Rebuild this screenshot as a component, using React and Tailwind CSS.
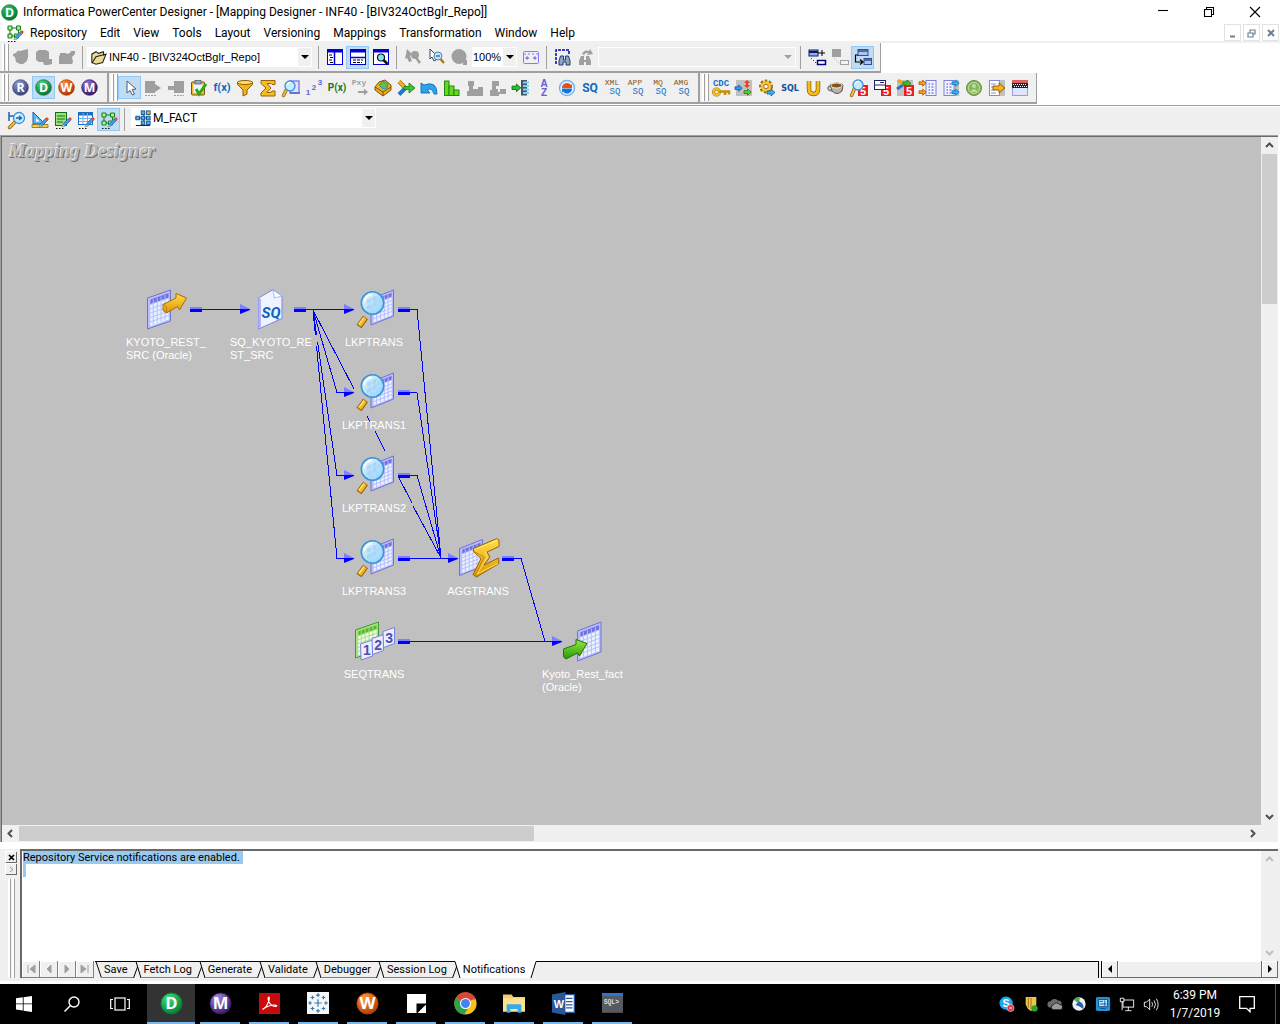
import React from "react";

const UI = "font-['Roboto','Open_Sans',sans-serif]";
const SANS = "font-['Liberation_Sans',Arial,sans-serif]";

/* ---------- small icon pieces ---------- */

function Svg({ children, s = 18, label }) {
  return (
    <svg width={s} height={s} viewBox="0 0 18 18" className="block shrink-0 overflow-visible" role="img" aria-label={label}>
      {children}
    </svg>
  );
}

function T({ x, y, size = 8, fill, children, font = "Liberation Sans", weight = "bold", anchor = "middle", italic }) {
  return (
    <text x={x} y={y} fontSize={size} fill={fill} fontFamily={`${font}, sans-serif`} fontWeight={weight} fontStyle={italic ? "italic" : "normal"} textAnchor={anchor}>
      {children}
    </text>
  );
}

function Ball({ letter, light, dark, id, size = 18, label }) {
  return (
    <Svg s={size} label={label || letter}>
      <defs>
        <radialGradient id={id} cx="35%" cy="25%" r="80%">
          <stop offset="0" stopColor={light} />
          <stop offset="1" stopColor={dark} />
        </radialGradient>
      </defs>
      <circle cx="9" cy="9" r="8.3" fill={`url(#${id})`} stroke={dark} strokeWidth="0.7" />
      <T x="9" y="13.5" size={13} fill="#fff" font="Open Sans">{letter}</T>
    </Svg>
  );
}

const Pencil = () => (
  <g>
    <path d="M8 16l1-3 6-6 2 2-6 6z" fill="#3b9be8" stroke="#1c5fa8" strokeWidth=".6" />
    <path d="M14 8l2-2 2 2-2 2z" fill="#e8502a" />
    <path d="M8 16l.8-2.6L11 15z" fill="#f1c46a" />
  </g>
);
const Dots = () => <path d="M2 17.5h8" stroke="#111" strokeWidth="1.2" strokeDasharray="1.5 1.5" />;

const MapIcon = () => (
  <Svg label="Mapping">
    <path d="M5 4h6M4 6v6M12.500 6v3M5 12h5" stroke="#1b7a1b" strokeWidth="1.1" fill="none" />
    {[[2, 2], [10.5, 2], [2, 10], [8.5, 10]].map(([x, y], i) => (
      <rect key={i} x={x} y={y} width="4" height="4" rx=".8" fill="#b5f09a" stroke="#12801a" strokeWidth="1.1" />
    ))}
    <Pencil />
    <Dots />
  </Svg>
);

const Lens = ({ x = 10, y = 7, r = 5.5 }) => (
  <g>
    <path d={`M${x - r * 0.7} ${y + r * 0.7}L1.5 16.5`} stroke="#8a5a0a" strokeWidth="3.4" strokeLinecap="round" />
    <path d={`M${x - r * 0.7} ${y + r * 0.7}L1.5 16.5`} stroke="#f3b93a" strokeWidth="2" strokeLinecap="round" />
    <circle cx={x} cy={y} r={r} fill="#c4ecff" stroke="#3c8fd6" strokeWidth="1.3" />
    <path d={`M${x - 3} ${y - 1}q1-3 4-2.5`} stroke="#fff" strokeWidth="1.3" fill="none" />
  </g>
);

const G = "#9f9f9f";
const Five = ({ x = 8, y = 6 }) => (
  <g>
    <rect x={x} y={y} width="10" height="11" fill="#ee1c1c" />
    <T x={x + 5} y={y + 9.5} size={11} fill="#fff">5</T>
  </g>
);

const Tbl = ({ c = "#7d7fe0" }) => (
  <g>
    <rect x="4" y="1.5" width="10" height="15" fill="#f3f3ff" stroke={c} />
    <path d="M6.500 5h1.500M9.500 5h2M6.500 8h1.500M9.500 8h2M6.500 11h1.500M9.500 11h2M6.500 14h1.500M9.500 14h2" stroke={c} strokeWidth="1.5" />
  </g>
);

const Arr = ({ x, y, c, d = "#333", k = 1 }) => (
  <path transform={`translate(${x} ${y}) scale(${k})`} d="M0 2h4V0l4 3.500L4 7V5H0z" fill={c} stroke={d} strokeWidth=".8" />
);

const BigSq = ({ top }) => (
  <Svg label={`${top} source qualifier`}>
    <T x="8" y="6" size={8} fill="#8a5a14" font="Liberation Mono" weight="normal">{top}</T>
    <T x="11" y="15" size={9} fill="#1472c8" font="Liberation Mono" weight="normal">SQ</T>
  </Svg>
);

const blobs = {
  g1: <path d="M1 7q0-2 3-2 1-3 4-2l8-2v8l-1 4-4 3H8l-4-2-1-5-2-1z" />,
  g2: <path d="M1 4l3-2h7l3 2v7h3v5l-4 1H9l-1-3H4l-3-2V7z" />,
  g3: <path d="M2 5h6l1 1 3-1 1-2h4v3l-3 3 1 5-1 2H1V8l1-1z" />,
};

/* ---------- toolbar icons ---------- */

const bar2 = [
  ["Select", <path d="M6 2v12l3-2.500 2.500 4.500 2-1-2.300-4.500 3.800-.5z" fill="#fff" stroke="#4a5a78" />, true],
  ["Source", <g fill={G}><path d="M1 2h10v3l6 4-6 4v1H1z" /><path d="M1 16.500h11" stroke={G} strokeDasharray="2 1" /></g>],
  ["Target", <g fill={G}><path d="M7 2h10v12H7v-3H1V7h6z" /><path d="M7 16.500h10" stroke={G} strokeDasharray="2 1" /></g>],
  ["Validate", <g><rect x="1.500" y="3" width="13" height="13" rx="1" fill="#f0b62c" stroke="#7c5606" /><rect x="3.500" y="5" width="9" height="9" fill="#eef4ff" /><rect x="5" y="1.500" width="6" height="3.500" fill="#9ab" stroke="#456" strokeWidth=".7" /><path d="M6 10l3 5 7-10" stroke="#2cab12" strokeWidth="3" fill="none" /></g>],
  ["Expression", <T x="9" y="12" size={11} fill="#0b66c2" font="Roboto">f(x)</T>],
  ["Filter", <g><path d="M1.500 3v2.500L7 11v6l4-2v-4l5.500-5.500V3z" fill="#f3b51e" stroke="#8e5c05" /><ellipse cx="9" cy="3.500" rx="7.500" ry="2" fill="#ffdf70" stroke="#8e5c05" /></g>],
  ["Aggregator", <path d="M2 1.500h14v4h-3l-1-1H8l4 4.500-4 4.500h4l1-1.500h3v5H2v-3L7 9 2 4.500z" fill="#f6bd1c" stroke="#96630a" />],
  ["Lookup", <g><rect x="8" y="2" width="9" height="12" fill="#dfe4ff" stroke="#7a7fe6" strokeWidth="1.400" /><path d="M8 14h10" stroke="#6a6fe0" strokeWidth="2" /><Lens x={8} y={7} r={5} /></g>],
  ["Sequence", <g><T x="3" y="16" size={8} fill="#6464d8">1</T><T x="9" y="11" size={8} fill="#6464d8">2</T><T x="15" y="6" size={8} fill="#6464d8">3</T></g>],
  ["Parameter", <T x="9" y="12" size={10} fill="#15761c" font="Roboto">P(x)</T>],
  ["Procedure", <g><T x="8" y="6" size={8} fill={G} font="Liberation Mono">Pxy</T><path d="M7 12h6V9.500l4 3.500-4 3.500V14H7z" fill={G} /></g>],
  ["Custom", <g><path d="M1 8l4-5 6-2 6 5v5l-8 6-8-6z" fill="#eeb020" stroke="#7a5208" /><path d="M1 8l8 5 8-5M9 13v4" stroke="#7a5208" fill="none" /><path d="M5 6l4-4 5 3-1 4-4 1z" fill="#5dc050" stroke="#1e7fd0" strokeWidth=".8" /></g>],
  ["Joiner", <g><path d="M2 15.500l6-6" stroke="#1f78c8" strokeWidth="4" /><path d="M2 2.500l6 6" stroke="#9a6808" strokeWidth="4" /><path d="M2 2.500l6 6" stroke="#f3b91c" strokeWidth="2.500" /><path d="M7 7.500h5V4l6 5-6 5v-3.500H7z" fill="#3fc32a" stroke="#0e7a14" strokeWidth=".8" /></g>],
  ["Undo", <path d="M1 4v10h9L7.500 11q4-3 6.500 4h3Q17 1 4 6z" fill="#29a3ec" stroke="#0e62b0" strokeWidth=".8" />],
  ["Rank", <g fill="#66d81c" stroke="#1f8a10" strokeWidth="1"><rect x="1.500" y="2" width="4.500" height="14.500" /><rect x="6" y="7" width="5" height="9.500" /><rect x="11" y="11" width="5" height="5.500" /></g>],
  ["Normalizer", <path d="M2 2h6v5H7v3h5V8h5v9H1v-5h2V7H2z" fill={G} />],
  ["Router", <path d="M3 2h7v5H7v3h2v3h2v-3h6v5h-7v2H1v-6h2z" fill={G} />],
  ["Update", <g><rect x="9" y="1" width="6" height="15.500" fill="#456" /><path d="M11 3.500h6M11 7h6M11 10.500h6M11 14h6" stroke="#7ed3f6" strokeWidth="2" /><Arr x={0} y={5} c="#2cc12c" d="#0d6c12" k={1.1} /></g>],
  ["Sorter", <g><T x="9" y="8" size={10} fill="#6a5acd">A</T><T x="9" y="17" size={10} fill="#6a5acd">Z</T></g>],
  ["Transaction", <g><circle cx="9" cy="9" r="7.500" fill="#eef6ff" stroke="#74b3f0" strokeWidth="1.500" /><path d="M4 9a5 5 0 0 1 9-3l1-1v4H9.500" fill="#ee4b14" /><path d="M14 9.500a5 5 0 0 1-9 3l-1 1V9.500h5" fill="#1a73d2" /></g>],
  ["Source Qualifier", <T x="9" y="13" size={12} fill="#0c6bc6" font="Roboto">SQ</T>],
];

const bar3 = [
  ["CDC key", <g><T x="9" y="7" size={9} fill="#1272c2" font="Liberation Mono">CDC</T><circle cx="4.500" cy="13" r="3" fill="none" stroke="#a87208" strokeWidth="3" /><circle cx="4.500" cy="13" r="3" fill="none" stroke="#f5c126" strokeWidth="2" /><path d="M7 12.500h10v3M13 13v3" stroke="#c88c0c" strokeWidth="2.500" fill="none" /></g>],
  ["Exchange", <g><rect x="1" y="1" width="16" height="16" fill="#c0c0c0" /><Arr x={0} y={6} c="#2b9df0" d="#124f90" k={0.9} /><Arr x={9} y={10} c="#5bd22a" d="#156a10" k={0.9} /><path d="M12 1l3 3h-2v2h2l-3 3-3-3h2V4H9z" fill="#ee3b18" /></g>],
  ["Gear", <g><circle cx="8" cy="7.500" r="5.500" fill="#f2bd32" stroke="#a4720f" strokeWidth="3" strokeDasharray="2.500 1.500" /><circle cx="8" cy="7.500" r="5" fill="#f5c540" /><circle cx="8" cy="7.500" r="2.200" fill="#fff" stroke="#a4720f" /><Arr x={9} y={10} c="#37aff5" d="#1260a8" k={1} /></g>],
  ["SQL", <T x="9" y="12" size={8} fill="#0f4f96" font="DejaVu Sans">SQL</T>],
  ["Union", <g fill="none"><path d="M5 2v8q0 5 4.500 5T14 10V2" stroke="#8e5e06" strokeWidth="4.500" /><path d="M5 2v8q0 5 4.500 5T14 10V2" stroke="#f7bd17" strokeWidth="3" /></g>],
  ["Java", <g><path d="M3 6q7-4 13 0l-1 6q-5 5-10 0z" fill="#b9b4aa" stroke="#555" /><ellipse cx="9.500" cy="6.500" rx="5.500" ry="2.500" fill="#8a5316" stroke="#eee" /><path d="M4 7q-5 1-2 4l3 1" stroke="#777" fill="none" strokeWidth="1.500" /></g>],
  ["Find 5", <g><Five /><Lens x={8} y={6} r={5} /></g>],
  ["Table 5", <g><Five /><rect x="1.500" y="1.500" width="11" height="9" fill="#fff" stroke="#20206a" /><path d="M2 6h10M7 3.500h4" stroke="#20206a" /></g>],
  ["Join 5", <g><rect x="1" y="1" width="16" height="16" fill="#c0c0c0" /><Five /><path d="M1 10l6-4" stroke="#1f78c8" strokeWidth="3" /><path d="M2 1l6 4" stroke="#e5a80e" strokeWidth="3" /><Arr x={7} y={1} c="#3fc32a" d="#0e7a14" k={1} /></g>],
  ["Import", <g><g transform="translate(3 0)"><Tbl /></g><Arr x={0} y={1} c="#f2a617" d="#a04808" k={0.9} /><Arr x={0} y={10} c="#f2a617" d="#a04808" k={0.9} /></g>],
  ["Export", <g><g transform="translate(-2 0)"><rect x="4" y="1" width="15" height="16" fill="#c0c0c0" /><Tbl /></g><Arr x={10} y={1} c="#25b8f6" d="#0d6fb4" k={0.9} /><Arr x={10} y={10} c="#25b8f6" d="#0d6fb4" k={0.9} /></g>],
  ["Identity", <g><circle cx="9" cy="9" r="7.500" fill="#86b55c" stroke="#5f8f3d" /><circle cx="9" cy="9" r="5.500" fill="none" stroke="#bfe0a0" /><circle cx="9" cy="7" r="2" fill="#bfe0a0" /><path d="M5.500 13q3.500-6 7 0" fill="#bfe0a0" /></g>],
  ["Output", <g><rect x="10" y="1" width="7" height="16" fill="#c0c0c0" /><rect x="1.500" y="1.500" width="10" height="15" fill="#fff" stroke="#8487e2" /><path d="M3 5h5M3 8h3M3 11h3M3 14h5" stroke="#8487e2" /><path d="M5 7h6V4l6 5-6 5v-3H5z" fill="#f6b21a" stroke="#96600a" /></g>],
  ["Mask", <g><rect x="1.500" y="1.500" width="15" height="15" fill="#dfe4ff" stroke="#9a9ce0" /><rect x="1" y="1" width="16" height="3" fill="#e06060" /><rect x="1" y="4" width="16" height="5" fill="#222" /><path d="M2 5.500h14M3 7.500h14" stroke="#fff" strokeDasharray="1 1" /></g>],
];

const Win = ({ children }) => (
  <g><rect x="1.500" y="1.500" width="15" height="15" fill="#fff" stroke="#0000d8" /><path d="M1 3h16" stroke="#0000d8" strokeWidth="3" />{children}</g>
);

/* ---------- toolbar parts ---------- */

function Tool({ label, active, children }) {
  return (
    <button
      type="button"
      aria-label={label}
      className={active
        ? "flex h-[23px] w-[23px] shrink-0 items-center justify-center border border-[#90c8f6] bg-[#c0dcf3]"
        : "flex h-[23px] w-[23px] shrink-0 items-center justify-center"}
    >
      {children}
    </button>
  );
}
const Tools = ({ items }) => items.map(([label, g, active]) => (
  <Tool key={label} label={label} active={active}><Svg label={label}>{g}</Svg></Tool>
));
const Sep = () => <div className="mx-1 h-[23px] w-px shrink-0 bg-[#a0a0a0]" />;
const Grip = () => (
  <div className="ml-[2px] flex h-[27px] shrink-0 gap-px">
    <div className="w-[3px] border-r border-[#a0a0a0] bg-white" />
    <div className="w-[3px] border-r border-[#a0a0a0] bg-white" />
  </div>
);
const Caret = ({ color = "#000" }) => (
  <svg width="8" height="4" viewBox="0 0 8 4" className="block"><path d="M0 0h8L4 4z" fill={color} /></svg>
);

function Combo({ label, value, className, icon, disabled, pad = "pl-1", font }) {
  return (
    <div className={`relative flex h-5 shrink-0 items-center ${disabled ? "border border-white bg-[#f0f0f0]" : "bg-white"} ${className}`}>
      {icon}
      <select aria-label={label} disabled={disabled} className={`h-full w-full min-w-0 appearance-none bg-transparent text-black outline-none ${pad} ${font}`}>
        <option>{value}</option>
      </select>
      <div className="pointer-events-none absolute inset-y-px right-px flex w-[13px] items-center justify-center bg-[#f0f0f0]">
        <Caret color={disabled ? "#a0a0a0" : "#000"} />
      </div>
    </div>
  );
}

/* ---------- scroll bars ---------- */

const chev = { up: "M1 6l3.500-3.500L8 6", down: "M1 3l3.500 3.500L8 3", left: "M6 1L2.500 4.500 6 8", right: "M3 1l3.500 3.500L3 8" };
function Arrow({ dir, color = "#505050" }) {
  return (
    <button type="button" aria-label={`Scroll ${dir}`} className="flex h-[17px] w-[17px] shrink-0 items-center justify-center bg-[#f0f0f0]">
      <svg width="9" height="9" viewBox="0 0 9 9"><path d={chev[dir]} fill="none" stroke={color} strokeWidth="2" /></svg>
    </button>
  );
}

/* ---------- mapping nodes ---------- */

function Grid3({ left, top, w, rise, h, stroke = "#7072d2", cell = "#e6f3ff", head = "#6f72dd", frame = "#b9bcff" }) {
  const p = (u, v) => `${left + u * w},${top + rise - u * rise + v * h}`;
  const lines = [];
  for (let i = 1; i < 5; i++) lines.push(`M${p(0.08 + i * 0.17, 0.1)}L${p(0.08 + i * 0.17, 0.93)}`);
  for (let i = 1; i < 6; i++) lines.push(`M${p(0.08, 0.1 + i * 0.14)}L${p(0.93, 0.1 + i * 0.14)}`);
  return (
    <g>
      <polygon points={`${p(0, 0)} ${p(1, 0)} ${p(1, 1)} ${p(0, 1)}`} fill={frame} stroke={stroke} strokeLinejoin="round" />
      <polygon points={`${p(0.12, 0.08)} ${p(0.92, 0.08)} ${p(0.92, 0.94)} ${p(0.12, 0.94)}`} fill={cell} />
      <polygon points={`${p(0.12, 0.08)} ${p(0.92, 0.08)} ${p(0.92, 0.24)} ${p(0.12, 0.24)}`} fill={head} />
      <path d={lines.join("")} stroke={frame} strokeWidth="1" fill="none" />
    </g>
  );
}

const Defs = () => (
  <defs>
    <linearGradient id="gold" x1="0" y1="0" x2="0" y2="1"><stop offset="0" stopColor="#ffe04a" /><stop offset="1" stopColor="#e09405" /></linearGradient>
    <linearGradient id="green" x1="0" y1="0" x2="0" y2="1"><stop offset="0" stopColor="#9be83a" /><stop offset="1" stopColor="#259a0c" /></linearGradient>
    <linearGradient id="glass" x1="0" y1="0" x2="1" y2="1"><stop offset="0" stopColor="#f2fcff" /><stop offset="1" stopColor="#84d0fa" /></linearGradient>
  </defs>
);

const nodeArt = {
  source: (
    <g>
      <Grid3 left={1.5} top={1} w={23} rise={8} h={31} />
      <path d="M17 15.500L30 9V4.500L40.500 9 33.500 21l-2-3.500-11 6.500-3.500-2.500z" fill="url(#gold)" stroke="#a86c06" strokeLinejoin="round" />
      <path d="M17.500 15.500l3 2v6" stroke="#a86c06" strokeWidth=".6" fill="none" />
    </g>
  ),
  sq: (
    <g>
      <path d="M8.500 9L23 .7 32 7v22.500L8.500 40z" fill="#eef3ff" stroke="#8083e6" strokeLinejoin="round" />
      <path d="M8.500 9l2.500 1v28.500l-2.500 1z" fill="#b2b5f7" />
      <path d="M23 1l1.500 8L32 7z" fill="#fff" stroke="#8fb0e8" strokeWidth=".8" />
      <T x="21" y="29" size={15} fill="#0a62c4" font="Roboto" italic>SQ</T>
    </g>
  ),
  lookup: (
    <g>
      <Grid3 left={17} top={1} w={22.5} rise={9} h={26} />
      <path d="M11.500 28.500L5 37.500" stroke="#966007" strokeWidth="6" />
      <path d="M11 29L5.500 36.700" stroke="#f5bb20" strokeWidth="4" />
      <path d="M10 28.500L5 35" stroke="#fff0a0" strokeWidth="1.200" />
      <circle cx="18.500" cy="14" r="11.200" fill="url(#glass)" fillOpacity=".9" stroke="#3b94d8" strokeWidth="1.600" />
      <path d="M13 11l4-2v4l-4 2zM18.500 8.500l4-2v4l-4 2zM13 17l4-2v4l-4 2zM18.500 14.500l4-2v4l-4 2z" fill="#9fd2f5" opacity=".7" />
      <path d="M10 13q1.500-7 8-7.500" stroke="#fff" strokeWidth="1.500" fill="none" />
    </g>
  ),
  agg: (
    <g>
      <Grid3 left={1.5} top={1.5} w={23} rise={9} h={27} />
      <path d="M15.500 10.500L38.500.7 41 2v6.500L29 14l3 5-6 8 14.500-7 .5 5.500L18.500 39 15 36.500l8-16-7.500-7z" fill="url(#gold)" stroke="#9a6206" strokeLinejoin="round" />
      <path d="M16.500 11.500L39 2.500M27 14l2.500 5L19 36l21-10.500" stroke="#fff07a" strokeWidth=".8" fill="none" />
      <path d="M16 13.500L26 19l-8.500 18" stroke="#b87806" strokeWidth=".8" fill="none" />
    </g>
  ),
  seq: (
    <g>
      <Grid3 left={1.5} top={1} w={23} rise={8} h={28} stroke="#3f9a22" cell="#effbe6" head="#55bb2a" frame="#a6e087" />
      {[["1", 6.5, 19, 12], ["2", 18, 13.5, 11.5], ["3", 29, 6.5, 11.5]].map(([n, x, y, w]) => (
        <g key={n}>
          <path d={`M${x} ${y + 4}l${w} -4v16l${w * -0.95} 4z`} fill="#e9efff" stroke="#7c7fdd" strokeLinejoin="round" />
          <T x={x + w / 2 + 0.5} y={y + 15} size={14} fill="#504fb0">{n}</T>
        </g>
      ))}
    </g>
  ),
  target: (
    <g>
      <Grid3 left={15.5} top={1} w={23.5} rise={9} h={30} />
      <path d="M1.500 28L14 23.500V18.500l11 4-7.500 12.500-2-3L4 38l-2.500-2z" fill="url(#green)" stroke="#23700c" strokeLinejoin="round" />
    </g>
  ),
};

const nodes = [
  ["source", 0, 0, ["KYOTO_REST_", "SRC (Oracle)"], true],
  ["sq", 1, 0, ["SQ_KYOTO_RE", "ST_SRC"], true],
  ["lookup", 2, 0, ["LKPTRANS"]],
  ["lookup", 2, 1, ["LKPTRANS1"]],
  ["lookup", 2, 2, ["LKPTRANS2"]],
  ["lookup", 2, 3, ["LKPTRANS3"]],
  ["agg", 3, 3, ["AGGTRANS"]],
  ["seq", 2, 4, ["SEQTRANS"]],
  ["target", 4, 4, ["Kyoto_Rest_fact", "(Oracle)"], true],
];

const outs = [[188, 172], [292, 172], [396, 172], [396, 255], [396, 338], [396, 421], [500, 421], [396, 504]];
const ins = [[238, 172], [342, 172], [342, 255], [342, 338], [342, 421], [446, 421], [550, 504]];

function Links() {
  return (
    <svg width="640" height="560" viewBox="0 0 640 560" className="absolute left-0 top-0" aria-hidden="true">
      <path
        shapeRendering="crispEdges"
        fill="none"
        stroke="#0000ff"
        d="M200 172.500H239M304 172.500H343M311 173L335 255.500H343M311 173L314.500 198M315.500 205L335 338.500H343M311 173L313.400 198M314.500 209L335 421.500H343M311 173L352 252M365 279L368 285M373 294L383 314M396 339L410 366M411 369L439 421M408 172.500H415L439 421M408 255.500H415L439 421M408 338.500H415L439 421M408 421.500H447M512 421.500H519L543 504.500M408 504.500H551"
      />
      {outs.map(([x, y], i) => (
        <g key={i} shapeRendering="crispEdges">
          <rect x={x} y={y - 2} width="12" height="2" fill="#8080ff" />
          <rect x={x} y={y} width="12" height="3" fill="#0000ff" />
        </g>
      ))}
      {ins.map(([x, y], i) => (
        <g key={i}>
          <path d={`M${x} ${y - 5}v5h10z`} fill="#8080ff" />
          <path d={`M${x} ${y}h10v1L${x} ${y + 5}z`} fill="#0000ff" />
        </g>
      ))}
    </svg>
  );
}

function Node({ kind, col, row, lines, left }) {
  return (
    <div className="absolute w-[80px]" style={{ left: 124 + col * 104, top: 152 + row * 83 }}>
      <svg width="42" height="42" viewBox="0 0 42 42" className="ml-5 block" role="img" aria-label={kind}>
        {nodeArt[kind]}
      </svg>
      <div className={`mt-[5px] whitespace-nowrap text-[11px] leading-[13px] text-white ${SANS} ${left ? "text-left" : "text-center"}`}>
        {lines.map((l) => <div key={l}>{l}</div>)}
      </div>
    </div>
  );
}

/* ---------- output tabs ---------- */

const tabs = ["Save", "Fetch Log", "Generate", "Validate", "Debugger", "Session Log", "Notifications"];
const navs = ["M3 1v8M10 1L5 5l5 4z", "M8 1L4 5l4 4z", "M4 1l4 4-4 4z", "M9 1v8M2 1l5 4-5 4z"];

function TabEdge({ kind }) {
  if (kind === "first") {
    return (
      <svg width="10" height="17" viewBox="0 0 10 17" className="block shrink-0">
        <path d="M1 .5h9M2 .5L7.500 17" fill="none" stroke="#000" />
        <path d="M7 16.500h3" stroke="#808080" />
      </svg>
    );
  }
  if (kind === "last") {
    return (
      <svg width="16" height="17" viewBox="0 0 16 17" className="block shrink-0">
        <path d="M0 0h11L6 17H0z" fill="#fff" />
        <path d="M6 17L11 .5h5" fill="none" stroke="#000" />
      </svg>
    );
  }
  return (
    <svg width="16" height="17" viewBox="0 0 16 17" className="block shrink-0">
      {kind === "active" && <path d="M8 0h8v17h-3z" fill="#fff" />}
      <path d={kind === "active" ? "M0 .5h8L13 17M5.500 17L9.500 6" : "M0 .5h16M8 .5L13 17M5.500 17L9.500 6"} fill="none" stroke="#000" />
      <path d={kind === "active" ? "M0 16.500h5" : "M0 16.500h5M13 16.500h3"} stroke="#808080" />
    </svg>
  );
}

/* ---------- task bar ---------- */

const apps = [
  ["PowerCenter Designer", <Ball letter="D" light="#3fe07a" dark="#067a34" id="tD" size={23} label="Designer" />, true],
  ["Workflow Monitor", <Ball letter="M" light="#a888e0" dark="#33185f" id="tM" size={23} label="Monitor" />],
  ["Acrobat", <Svg s={21} label="Acrobat"><rect width="18" height="18" fill="#c90a0a" /><path d="M3 14q3-1 5-6 1.500-4 .5-4.500-1.500 0 0 4 2 4 6 4 1.500-.5 0-1-4-1-11.500 3.500z" fill="none" stroke="#fff" strokeWidth="1" /></Svg>],
  ["Tableau", <Svg s={22} label="Tableau"><rect width="18" height="18" fill="#f4f7fa" /><path d="M9 6v6M6 9h6M9 1v3M7.500 2.500h3M9 14v3M7.500 15.500h3M1 9h3M2.500 7.500v3M14 9h3M15.500 7.500v3M4.500 3v3M3 4.500h3M13.500 3v3M12 4.500h3M4.500 12v3M3 13.500h3M13.500 12v3M12 13.500h3" stroke="#3c79a6" strokeWidth="1" /></Svg>],
  ["Workflow Manager", <Ball letter="W" light="#ff9a3c" dark="#b63a02" id="tW" size={23} label="Workflow" />],
  ["Notes", <Svg s={19} label="Notes"><path d="M0 0h18v18H0z" fill="#fff" /><path d="M9 9h9v1l-8 8H9z" fill="#000" /></Svg>],
  ["Chrome", <Svg s={23} label="Chrome"><circle cx="9" cy="9" r="8.700" fill="#fbc116" /><path d="M9 9L1.400 4.700A8.700 8.700 0 0 1 16.600 4.700z" fill="#d9453a" /><path d="M1.400 4.700A8.700 8.700 0 0 0 8 17.700L12 11l-3-2z" fill="#2da24c" /><path d="M9 4.700h7.600l.5 1.100H9z" fill="#d9453a" /><circle cx="9" cy="9" r="4.300" fill="#fff" /><circle cx="9" cy="9" r="3.500" fill="#4383f0" /></Svg>],
  ["File Explorer", <Svg s={22} label="Explorer"><path d="M0 2h7l1.500 2H18v12H0z" fill="#f4cc62" /><path d="M0 5h18v11H0z" fill="#fbe292" /><path d="M3 17v-6q0-1 1-1h10q1 0 1 1v6h-3v-3H6v3z" fill="#37a9e8" /></Svg>],
  ["Word", <Svg s={23} label="Word"><path d="M9 2h8.500v14H9z" fill="#fff" stroke="#2a569a" /><path d="M11 5h5M11 7.500h5M11 10h5M11 12.500h5" stroke="#2a569a" /><path d="M0 2l10.500-2v18L0 16z" fill="#2a569a" /><T x="5.300" y="12.200" size={8.500} fill="#fff">W</T></Svg>],
  ["SQL Plus", <Svg s={21} label="SQL"><rect y="1" width="18" height="16" fill="#565a62" /><rect y="0" width="18" height="2.500" fill="#2f72d8" /><T x="8" y="9" size={5.500} fill="#ddd" font="Liberation Mono">SQL&gt;</T></Svg>],
];

const tray = [
  ["Skype", <g><circle cx="8" cy="8" r="7.500" fill="#18a9ee" /><T x="8" y="12" size={12} fill="#fff">S</T><circle cx="13" cy="13.500" r="4" fill="#e02a38" stroke="#fff" strokeWidth=".6" /><path d="M11.500 12l3 3M14.500 12l-3 3" stroke="#fff" /></g>],
  ["Security", <g><path d="M3 1h12v8q-1 6-6 8-5-3-6-8z" fill="#f0c64a" /><path d="M6 2v11M9 2v13" stroke="#8d6a14" /><circle cx="13" cy="14" r="3.500" fill="#29a533" /></g>],
  ["OneDrive", <g><path d="M4 13a3.500 3.500 0 0 1 0-7 5 5 0 0 1 8-1 4 4 0 0 1 1 8z" fill="#6c6c6c" /><path d="M7 15.500a2.800 2.800 0 0 1 0-5.500 4 4 0 0 1 7-.5 3 3 0 0 1 1 6z" fill="#9a9a9a" stroke="#000" strokeWidth=".8" /></g>],
  ["Network tool", <g><circle cx="9" cy="9" r="7.500" fill="#eef2f4" /><path d="M9 9L3 4a8 8 0 0 1 7-2.500z" fill="#4fae4a" /><path d="M9 6q6 2 5 9-4-4-9-5z" fill="#2b5fa8" /></g>],
  ["Graphics", <g><rect x="1" y="1" width="16" height="16" rx="2" fill="#2590d8" /><rect x="4" y="4" width="10" height="8" fill="#bfe5fb" stroke="#0d4f88" /><path d="M5 6h4M5 9h8M6 14h6M11 5v6" stroke="#0d4f88" /></g>],
  ["Network", <g stroke="#fff" fill="none"><rect x="4.500" y="4.500" width="12" height="8" /><path d="M10.500 12v4M7 16.500h7" /><path d="M1.500 2.500h4v4h-4zM3.500 6v10" fill="#000" /></g>],
  ["Volume", <g stroke="#fff" fill="none"><path d="M1.500 7v5h2.500l3.500 3.500v-12L4 7z" /><path d="M10 7q1.500 2.500 0 5M12.500 5q3 4.500 0 9M15 3q4 6.500 0 13" /></g>],
];

export default function App() {
  return (
    <div className={`flex min-h-screen w-full flex-col overflow-hidden bg-white text-xs text-black ${UI}`}>
      {/* title bar */}
      <header className="flex h-6 items-center">
        <div className="flex w-[23px] pl-px"><Ball letter="D" light="#2cc46a" dark="#04752f" id="title" size={17} /></div>
        <h1 className="whitespace-nowrap text-xs font-normal">Informatica PowerCenter Designer - [Mapping Designer - INF40 - [BIV324OctBglr_Repo]]</h1>
        <div className="ml-auto flex">
          {["M0 .5h10", "M.5 2.500h7v7h-7zM2.500 2.500V.5h7v7h-2", "M0 0l10 10M10 0L0 10"].map((d, i) => (
            <button key={d} type="button" aria-label={["Minimize", "Restore", "Close"][i]} className="flex h-5 w-[46px] items-center justify-center">
              <svg width="10" height={i ? 10 : 4} viewBox={i ? "0 0 10 10" : "0 0 10 4"} className="overflow-visible"><path d={d} fill="none" stroke="#000" strokeWidth="1.100" /></svg>
            </button>
          ))}
          <div className="w-[2px]" />
        </div>
      </header>

      {/* menu bar */}
      <nav className="flex h-[19px] items-center border-b-2 border-[#f0f0f0]">
        <div className="w-[30px] pl-1.5"><MapIcon /></div>
        <div className="flex gap-[13px]">
          {["Repository", "Edit", "View", "Tools", "Layout", "Versioning", "Mappings", "Transformation", "Window", "Help"].map((m) => (
            <button key={m} type="button" className="leading-4">{m}</button>
          ))}
        </div>
        <div className="ml-auto flex gap-[2px] pr-px">
          {["M2 8.500h5", "M1 5h5v4H1zM3 5V2h5v4H6", "M2 2l6 6M8 2L2 8"].map((d, i) => (
            <button key={d} type="button" aria-label={["Minimize child", "Restore child", "Close child"][i]} className="flex h-[17px] w-[17px] items-center justify-center border border-[#e2e2e2]">
              <svg width="10" height="10" viewBox="0 0 10 10"><path d={d} fill="none" stroke="#6f7f92" strokeWidth={i === 1 ? 1.2 : 2} /></svg>
            </button>
          ))}
        </div>
      </nav>

      {/* standard tool bar */}
      <div className="flex h-[30px] w-fit items-center border-b-2 border-r border-[#a0a0a0] bg-[#f0f0f0] pr-1.5">
        <Grip />
        <Tools items={[["Connect", <g fill={G}>{blobs.g1}</g>], ["Disconnect", <g fill={G}>{blobs.g2}</g>], ["Open folder", <g fill={G}>{blobs.g3}</g>]]} />
        <Sep />
        <Combo
          label="Folder"
          value="INF40 - [BIV324OctBglr_Repo]"
          className="w-[225px] pl-1"
          pad="pl-[3px]"
          font={`text-[11px] ${SANS}`}
          icon={<Svg s={15} label="Folder"><path d="M1 15V5l5-3 3 2 6-2v4l3-1-4 10-8 2z" fill="#e8dc98" stroke="#222" strokeWidth="1.300" /><path d="M1 16L6 8l11-3" fill="none" stroke="#222" strokeWidth="1.300" /></Svg>}
        />
        <div className="w-[2px]" />
        <Sep />
        <Tools items={[
          ["Navigator", <Win><path d="M8.500 4v12" stroke="#0000d8" strokeWidth="1.500" /><path d="M3 7h3M4 9.500h3M3 12h3M4 14.500h3" stroke="#000" /></Win>],
          ["Output window", <Win><path d="M2 9.500h14" stroke="#0000d8" strokeWidth="1.500" /><path d="M4 12h10M4 14.500h9" stroke="#000" strokeDasharray="3 1" /></Win>, true],
          ["Overview", <Win><circle cx="9" cy="9.500" r="3.500" fill="#7fe8f0" stroke="#111" strokeWidth="1.200" /><path d="M11.500 12l4 4" stroke="#111" strokeWidth="2.500" /></Win>],
        ]} />
        <Sep />
        <Tools items={[
          ["Zoom region", <g fill={G}><path d="M3 1l5 5-2 2 2 5-3 1-2-4-2 1z" /><circle cx="11" cy="7" r="4" /><path d="M13 9l4 5-2 2-4-6z" /></g>],
          ["Zoom out", <g><path d="M3 1v10l2-2 2 4 2-1-2-4h3z" fill="#fff" stroke="#345" /><circle cx="11" cy="8" r="4" fill="#bfe6fb" stroke="#4a86b8" /><path d="M9 8h4" stroke="#234" /><path d="M13.500 11l3.500 4" stroke="#b57a15" strokeWidth="2.500" /></g>],
          ["Zoom in", <g fill={G}><circle cx="9" cy="8.500" r="7.500" /><path d="M13 12h4v5h-4z" /></g>],
        ]} />
        <Combo label="Zoom" value="100%" className="ml-[2px] w-[45px]" pad="pl-px" font={`text-[11px] ${SANS}`} />
        <div className="w-[2px]" />
        <Tools items={[["Fit", <g fill="none" stroke="#7d7ff5"><rect x="1.500" y="3.500" width="15" height="12" rx="1" /><path d="M2 6h14" strokeDasharray="2 2" /><path d="M4 10h3M11 10h3M5.500 8.500L4 10l1.500 1.500M12.500 8.500L14 10l-1.500 1.500" strokeWidth="1.300" /></g>]]} />
        <Sep />
        <Tools items={[
          ["Find", <g><path d="M2 16V2h13v5" fill="none" stroke="#0000b8" strokeWidth="1.500" strokeDasharray="3 1" /><path d="M5 17v-4l1.500-5h3v4h2V8h3l1.500 5v4h-4v-3h-3v3z" fill="#8fa5c6" stroke="#223a66" /></g>],
          ["Find next", <g fill={G}><path d="M2 17v-4l2-5h3v4h2V8h3l2 5v4h-5v-3H7v3z" /><path d="M5 6q2-5 7-3l1-2 3 5-6 1 1-2q-2-1-4 2z" /></g>],
        ]} />
        <Combo label="Search" value="" className="ml-px w-[198px]" disabled font="" />
        <Sep />
        <Tools items={[
          ["Expand", <g><rect x="1" y="2" width="9" height="6" fill="#8fb0ef" stroke="#0b1c5c" /><path d="M1 4h9" stroke="#0b1c5c" strokeWidth="2" /><path d="M10 5h7M14 2v6" stroke="#000" /><rect x="9.500" y="12.500" width="8" height="4" fill="#fff" stroke="#000080" strokeWidth="1.500" /><path d="M3 10l5 5" stroke="#000" strokeDasharray="1 2" /></g>],
          ["Collapse", <g><rect x="1" y="1" width="9" height="8" fill={G} /><path d="M3 10l5 5" stroke={G} strokeDasharray="1 2" /><rect x="9.500" y="12.500" width="8" height="4" fill="#f4f4f4" stroke={G} /></g>],
          ["Arrange", <g><rect x="4" y="1.500" width="10" height="6" fill="#a9c4f5" stroke="#31508f" /><path d="M4 3h10" stroke="#31508f" strokeWidth="1.500" /><rect x="10" y="10.500" width="7.500" height="6" fill="#a9c4f5" stroke="#31508f" /><path d="M10 12h8" stroke="#31508f" strokeWidth="1.500" /><path d="M4 7H1.500v7H8M6 11.500L9 14l-3 2.500" fill="none" stroke="#000" strokeWidth="1.200" /></g>, true],
        ]} />
      </div>

      {/* transformation tool bars */}
      <div className="flex h-[31px] w-fit bg-[#f0f0f0]">
        <div className="flex items-center border-b-2 border-r-2 border-[#a0a0a0] pr-1.5">
          <Grip />
          <Tool label="Repository Manager"><Ball letter="R" light="#8e9cd6" dark="#38426f" id="r" size={17} /></Tool>
          <Tool label="Designer" active><Ball letter="D" light="#4fd686" dark="#08702f" id="d" size={17} /></Tool>
          <Tool label="Workflow Manager"><Ball letter="W" light="#ff8f3a" dark="#a83204" id="w" size={17} /></Tool>
          <Tool label="Workflow Monitor"><Ball letter="M" light="#9b78dc" dark="#301660" id="m" size={17} /></Tool>
        </div>
        <div className="flex items-center border-b-2 border-r-2 border-[#a0a0a0] pr-[5px]">
          <Grip />
          <Tools items={bar2} />
          {["XML", "APP", "MQ", "AMG"].map((t) => <Tool key={t} label={t}><BigSq top={t} /></Tool>)}
        </div>
        <div className="flex items-center border-b-2 border-r border-[#a0a0a0] pr-[5px]">
          <Grip />
          <Tools items={bar3} />
        </div>
      </div>

      {/* designer tool bar */}
      <div className="mt-px flex h-[30px] items-start border-t border-[#a0a0a0] bg-[#f0f0f0] pl-[5px] pt-[2px] shadow-[inset_0_1px_0_#fff]">
        <Tools items={[
          ["Source Analyzer", <g><path d="M1 5h8M1 1v9" stroke="#1c62b0" strokeWidth="1.500" /><Lens x={11} y={7} r={5.5} /><path d="M8 7h5M11 5l2.500 2L11 9" stroke="#1c62b0" fill="none" strokeWidth="1.300" /></g>],
          ["Target Designer", <g><path d="M2 1v12h12z" fill="#5cb6f2" stroke="#1560a8" /><path d="M5 7v3.500h3.500z" fill="#fff" /><path d="M1 13.500h16v3H1z" fill="#f1cf4e" stroke="#8c6a10" strokeWidth=".8" /><Pencil /></g>],
          ["Transformation Developer", <g><rect x="1.500" y="1.500" width="11" height="13" fill="#9ee07c" stroke="#12701a" /><path d="M3 5h8M3 8h8M3 11h6" stroke="#12701a" /><Pencil /><Dots /></g>],
          ["Mapplet Designer", <g><rect x="1.500" y="1.500" width="14" height="12" fill="#fff" stroke="#1d6cc0" /><path d="M1.500 3h14" stroke="#1d6cc0" strokeWidth="3" /><path d="M2 7.500h13M2 10.500h13M6 2v11M10.500 2v11" stroke="#6fb0ea" /><Pencil /><Dots /></g>],
        ]} />
        <Tool label="Mapping Designer" active><MapIcon /></Tool>
        <Sep />
        <Combo
          label="Mapping"
          value="M_FACT"
          className="ml-[2px] w-[245px] pl-1"
          pad="pl-[2px]"
          font=""
          icon={<Svg s={16} label="Mapping"><path d="M0 9h8M10 4v10M4 9h10" stroke="#123a6a" strokeWidth="1.200" /><path d="M1 17.500h16" stroke="#000" />{[[1, 7, "#4db0f4"], [7, 1, "#4db0f4"], [7, 7, "#4db0f4"], [7, 12.5, "#4db0f4"], [13, 1, "#e8b83a"], [13, 7, "#4db0f4"], [13, 12.5, "#4db0f4"]].map(([x, y, c], i) => <rect key={i} x={x} y={y} width="4" height="4" fill={c} stroke="#124c8c" />)}</Svg>}
        />
      </div>

      {/* workspace */}
      <main className="mr-[2px] flex min-h-0 flex-1 flex-col border-l border-t border-[#a0a0a0]">
        <div className="flex flex-1 border-l border-t border-[#696969]">
          <div className="relative min-w-0 flex-1 overflow-hidden bg-[#c0c0c0]">
            <h2 className="absolute left-[7px] top-[2px] font-['Liberation_Serif',serif] text-[19px] font-bold italic leading-6 text-[#b4b4b4] [text-shadow:-1px_-1px_0_#e8e8e8,1px_1px_0_#707070]">Mapping Designer</h2>
            <Links />
            <svg width="0" height="0" className="absolute"><Defs /></svg>
            {nodes.map(([kind, col, row, lines, left]) => (
              <Node key={lines[0]} kind={kind} col={col} row={row} lines={lines} left={left} />
            ))}
          </div>
          <div className="flex w-[17px] flex-col bg-[#f0f0f0]">
            <Arrow dir="up" />
            <div className="mx-px h-[150px] bg-[#cdcdcd]" />
            <div className="flex-1" />
            <Arrow dir="down" />
          </div>
        </div>
        <div className="flex h-[17px] border-l border-[#696969] bg-[#f0f0f0]">
          <Arrow dir="left" />
          <div className="flex flex-1"><div className="my-px w-[42%] bg-[#cdcdcd]" /></div>
          <Arrow dir="right" />
          <div className="w-[17px]" />
        </div>
      </main>

      {/* output window */}
      <section className="mt-[7px] flex h-[132px] bg-[#f0f0f0] pb-[3px] pr-[2px]">
        <div className="flex w-5 flex-col items-center gap-px pl-[3px] pt-[3px]">
          {["M2 2l5 5M7 2L2 7", "M3 2l3 2.500L3 7"].map((d, i) => (
            <button key={d} type="button" aria-label={i ? "Expand output" : "Close output"} className="flex h-[11px] w-[11px] items-center justify-center border-b border-r border-[#696969] bg-[#f0f0f0] shadow-[-1px_-1px_0_#fff]">
              <svg width="9" height="9" viewBox="0 0 9 9"><path d={d} fill="none" stroke={i ? "#909090" : "#000"} strokeWidth={i ? 1 : 1.7} /></svg>
            </button>
          ))}
          <div className="mt-[3px] flex flex-1 gap-px">
            <div className="w-[3px] border-r border-[#a0a0a0] bg-white" />
            <div className="w-[3px] border-r border-[#a0a0a0] bg-white" />
          </div>
        </div>
        <div className="flex min-w-0 flex-1 flex-col border-l-2 border-t-2 border-[#696969]">
          <div className="flex flex-1 bg-white">
            <div role="log" className="min-w-0 flex-1 pl-px text-[11px] leading-[13px]">
              <mark className="block w-fit bg-[#99c9ef] pr-[3px] text-black">Repository Service notifications are enabled.</mark>
              <mark className="block h-[13px] w-[3px] bg-[#99c9ef]" />
            </div>
            <div className="flex w-[17px] flex-col justify-between bg-[#f0f0f0]">
              <Arrow dir="up" color="#bfbfbf" />
              <Arrow dir="down" color="#bfbfbf" />
            </div>
          </div>
          <div className="flex h-[17px] text-[11px] leading-[17px]">
            {navs.map((d, i) => (
              <button key={d} type="button" aria-label={["First tab", "Previous tab", "Next tab", "Last tab"][i]} className="flex w-[18px] items-center justify-center border-b border-r border-[#808080] bg-[#f0f0f0] shadow-[inset_1px_1px_0_#fff]">
                <svg width="12" height="10" viewBox="0 0 12 10"><path d={d} fill="#a0a0a0" stroke="#a0a0a0" /></svg>
              </button>
            ))}
            <div role="tablist" className="flex min-w-0 flex-1 border-r border-black">
              {tabs.map((t, i) => (
                <React.Fragment key={t}>
                  <TabEdge kind={i === 0 ? "first" : i === 6 ? "active" : "inner"} />
                  <button type="button" role="tab" aria-selected={i === 6} className={i === 6 ? "whitespace-nowrap bg-white" : "whitespace-nowrap border-b border-[#808080] border-t border-t-black leading-[15px]"}>{t}</button>
                </React.Fragment>
              ))}
              <TabEdge kind="last" />
              <div className="flex-1 border-t border-black" />
            </div>
            <div className="ml-[2px] flex w-[177px] border-l border-black">
              {[0, 1].map((i) => (
                <React.Fragment key={i}>
                  {i === 1 && <div className="flex-1 border-b border-r border-[#696969] bg-[#f0f0f0] shadow-[inset_1px_1px_0_#fff]" />}
                  <button type="button" aria-label={i ? "Scroll tabs right" : "Scroll tabs left"} className="flex w-4 items-center justify-center border-b border-r border-[#696969] bg-[#f0f0f0] shadow-[inset_1px_1px_0_#fff]">
                    <svg width="4" height="8" viewBox="0 0 4 8"><path d={i ? "M0 0l4 4-4 4z" : "M4 0L0 4l4 4z"} /></svg>
                  </button>
                </React.Fragment>
              ))}
            </div>
          </div>
        </div>
      </section>

      {/* task bar */}
      <footer className="mt-[3px] flex h-10 bg-black text-white">
        <button type="button" aria-label="Start" className="flex w-12 items-center justify-center">
          <svg width="16" height="16" viewBox="0 0 16 16" fill="#fff"><path d="M0 2.300L6.800 1.300v6.200H0zM7.600 1.200L16 0v7.500H7.600zM0 8.300h6.800v6.200L0 13.600zM7.600 8.300H16V16l-8.400-1.200z" /></svg>
        </button>
        <button type="button" aria-label="Search" className="flex w-12 items-center justify-center">
          <svg width="16" height="16" viewBox="0 0 16 16" fill="none" stroke="#fff" strokeWidth="1.400"><circle cx="10" cy="6" r="5" /><path d="M6.500 9.500L.5 15.500" /></svg>
        </button>
        <button type="button" aria-label="Task view" className="mr-[3px] flex w-12 items-center justify-center">
          <svg width="20" height="14" viewBox="0 0 20 14" fill="none" stroke="#fff" strokeWidth="1.200"><rect x="5" y="1" width="10" height="12" /><path d="M3 2.500H.7v9H3M17 2.500h2.300v9H17" /></svg>
        </button>
        <div className="flex gap-px">
          {apps.map(([name, icon, on]) => (
            <button key={name} type="button" aria-label={name} className={on ? "flex w-12 flex-col items-center bg-[#333]" : "flex w-12 flex-col items-center"}>
              <span className="flex h-[38px] items-center">{icon}</span>
              <span className={on ? "h-[2px] w-full bg-[#76b9ed]" : "h-[2px] w-10 bg-[#76b9ed]"} />
            </button>
          ))}
        </div>
        <div className="ml-auto flex items-center">
          {tray.map(([name, g]) => (
            <button key={name} type="button" aria-label={name} className="flex w-6 justify-center"><Svg s={16} label={name}>{g}</Svg></button>
          ))}
          <div className="w-[64px] text-center text-xs leading-[18px]">
            <div>6:39 PM</div>
            <div>1/7/2019</div>
          </div>
          <button type="button" aria-label="Notifications" className="flex w-10 justify-center">
            <svg width="16" height="17" viewBox="0 0 16 17"><path d="M.7.700h14.600v11.600H11v3.500l-3.500-3.500H.7z" fill="none" stroke="#fff" strokeWidth="1.300" /></svg>
          </button>
          <div className="ml-2 mr-1 h-10 w-px bg-[#555]" />
        </div>
      </footer>
    </div>
  );
}
